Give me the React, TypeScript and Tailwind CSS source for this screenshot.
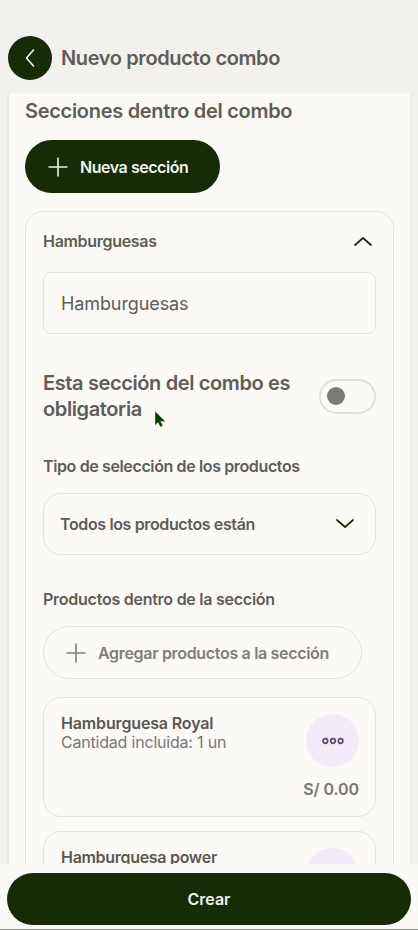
import { useState } from 'react';

interface Product {
  name: string;
  nameClass: string;
  quantity?: number;
  price?: string;
}

const products: Product[] = [
  { name: 'Hamburguesa Royal', nameClass: 'tracking-[-0.15px]', quantity: 1, price: 'S/ 0.00' },
  { name: 'Hamburguesa power', nameClass: 'tracking-[-0.3px]' },
];

function PlusIcon() {
  return (
    <svg width="20" height="20" viewBox="0 0 20 20" fill="none" stroke="currentColor" strokeWidth="1.6" className="shrink-0">
      <path d="M10 .5v19M.5 10h19" />
    </svg>
  );
}

function ChevronIcon({ d }: { d: string }) {
  return (
    <svg width="18" height="10" viewBox="0 0 18 10" fill="none" stroke="#172b0a" strokeWidth="1.7" strokeLinecap="round" strokeLinejoin="round" className="shrink-0">
      <path d={d} />
    </svg>
  );
}

function DotsIcon() {
  return (
    <svg width="22" height="8" viewBox="0 0 22 8" fill="none" stroke="#574570" strokeWidth="1.7">
      <circle cx="3.4" cy="4" r="2.3" />
      <circle cx="11" cy="4" r="2.3" />
      <circle cx="18.6" cy="4" r="2.3" />
    </svg>
  );
}

function ProductCard({ product }: { product: Product }) {
  return (
    <div className="h-[120px] shrink-0 rounded-[18px] border border-[#e4e3df] pr-4 pl-[17px] pt-4">
      <div className="flex justify-between">
        <div className="text-base leading-[19px]">
          <h4 className={`font-semibold text-[#595855] ${product.nameClass}`}>{product.name}</h4>
          {product.quantity && <p className="tracking-[-0.2px] text-[#797875]">Cantidad incluida: {product.quantity} un</p>}
        </div>
        <button className="flex size-[53px] items-center justify-center rounded-full bg-[#f3ebf7]">
          <DotsIcon />
        </button>
      </div>
      {product.price && (
        <p className="mt-3 text-right text-base leading-5 font-semibold tracking-[-0.1px] text-[#777673]">{product.price}</p>
      )}
    </div>
  );
}

export default function App() {
  const [sectionName, setSectionName] = useState('Hamburguesas');
  const [required, setRequired] = useState(false);

  return (
    <div className="flex h-[930px] w-[418px] flex-col overflow-hidden bg-[#f2f1ed] font-['Inter',sans-serif] text-[#5e5d5a]">
      <header className="flex h-[93px] shrink-0 items-end gap-[9px] pb-[13px] pl-2">
        <button className="flex size-11 items-center justify-center rounded-full bg-[#172b07] text-[#fbfaf5]">
          <svg width="10" height="18" viewBox="0 0 10 18" fill="none" stroke="currentColor" strokeWidth="1.5" strokeLinecap="round" strokeLinejoin="round">
            <path d="M8.5 1L1.5 9l7 8" />
          </svg>
        </button>
        <h1 className="pb-[9px] text-xl leading-[26px] font-semibold tracking-[-0.38px]">Nuevo producto combo</h1>
      </header>

      <main className="mx-[7px] min-h-0 flex-1 overflow-hidden border-r border-l-2 border-[#e9e8e4] bg-[#fbfaf6] px-4 pt-[5px]">
        <h2 className="text-xl leading-[26px] font-semibold tracking-[-0.3px]">Secciones dentro del combo</h2>

        <button className="mt-4 flex h-[53px] w-[195px] items-center gap-3 rounded-full bg-[#172b07] pl-[23px] text-[#f0f2e8]">
          <PlusIcon />
          <span className="text-base font-semibold tracking-[-0.45px] whitespace-nowrap">Nueva sección</span>
        </button>

        <section className="mt-[18px] w-[369px] rounded-[18px] border border-[#e4e3df] px-[17px] pt-4">
          <div className="flex h-[26px] items-center justify-between pr-1">
            <h3 className="text-base font-semibold tracking-[-0.3px]">Hamburguesas</h3>
            <ChevronIcon d="M1 9l8-7 8 7" />
          </div>

          <input
            value={sectionName}
            onChange={(e) => setSectionName(e.target.value)}
            className="mt-[18px] block h-[62px] w-full rounded-lg border border-[#e4e3df] px-[17px] text-lg tracking-[-0.1px] outline-none"
          />

          <div className="relative mt-9 flex items-center justify-between">
            <p className="w-[265px] text-xl leading-[26px] font-semibold tracking-[-0.38px]">
              Esta sección del combo es<br />obligatoria
            </p>
            <button
              onClick={() => setRequired(!required)}
              className={`flex h-[35px] w-[57px] items-center rounded-full border-2 border-[#e1e0dc] px-1.5 ${required ? 'justify-end' : ''}`}
            >
              <span className="size-[18px] rounded-full bg-[#7b7a77]" />
            </button>
            <svg width="12" height="18" viewBox="0 0 12 18" className="absolute top-[40px] left-[111px]">
              <path d="M1 1v14.500l3-3 2.300 4.500 2.700-1.200-2.300-4.300H11.500z" fill="#0d3d08" stroke="#dfe5d9" strokeWidth=".5" />
            </svg>
          </div>

          <h3 className="mt-[31px] text-base leading-[26px] font-semibold tracking-[-0.37px]">Tipo de selección de los productos</h3>
          <div className="mt-3.5 flex h-[62px] items-center justify-between rounded-[18px] border border-[#e4e3df] pr-[21px] pb-px pl-4">
            <span className="text-base font-semibold tracking-[-0.37px]">Todos los productos están</span>
            <ChevronIcon d="M1 1l8 7 8-7" />
          </div>

          <h3 className="mt-[31px] text-base leading-[26px] font-semibold tracking-[-0.25px]">Productos dentro de la sección</h3>
          <button className="mt-3.5 flex h-[53px] w-[319px] items-center gap-3 rounded-full border border-[#e4e3df] pl-[22px] text-[#7f7e7a]">
            <PlusIcon />
            <span className="text-base font-semibold tracking-[-0.32px] whitespace-nowrap">Agregar productos a la sección</span>
          </button>

          <div className="mt-[18px] flex flex-col gap-3.5">
            {products.map((product) => (
              <ProductCard key={product.name} product={product} />
            ))}
          </div>
        </section>
      </main>

      <footer className="h-[66px] shrink-0 border-b border-[#8f8e8c] bg-[#fbfaf6] px-[7px] pt-[9px]">
        <button className="h-[52px] w-full rounded-full bg-[#172b07] text-base font-semibold text-[#f0f2e8]">Crear</button>
      </footer>
    </div>
  );
}
